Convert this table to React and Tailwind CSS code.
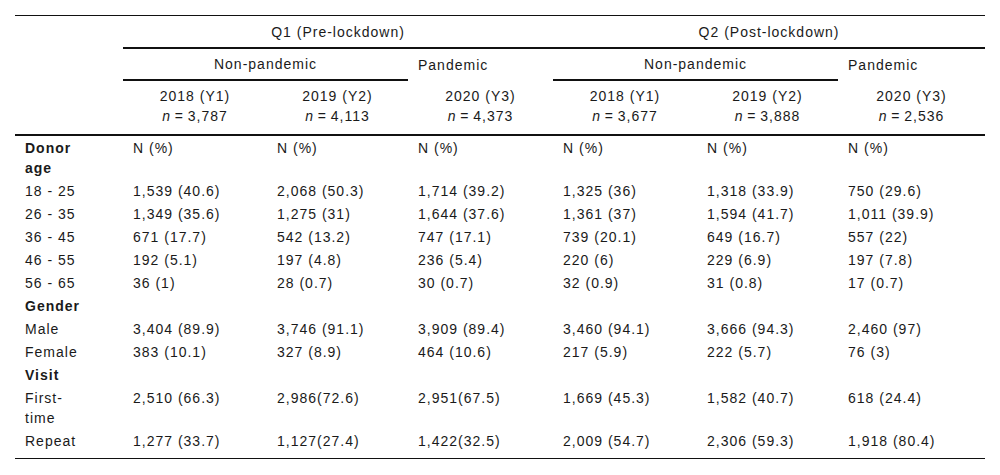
import React from 'react';

const years = [
  { label: '2018 (Y1)', n: '3,787' },
  { label: '2019 (Y2)', n: '4,113' },
  { label: '2020 (Y3)', n: '4,373' },
  { label: '2018 (Y1)', n: '3,677' },
  { label: '2019 (Y2)', n: '3,888' },
  { label: '2020 (Y3)', n: '2,536' },
];

const rows = [
  { label: 'Donor age', head: true, cells: ['N (%)', 'N (%)', 'N (%)', 'N (%)', 'N (%)', 'N (%)'] },
  { label: '18 - 25', cells: ['1,539 (40.6)', '2,068 (50.3)', '1,714 (39.2)', '1,325 (36)', '1,318 (33.9)', '750 (29.6)'] },
  { label: '26 - 35', cells: ['1,349 (35.6)', '1,275 (31)', '1,644 (37.6)', '1,361 (37)', '1,594 (41.7)', '1,011 (39.9)'] },
  { label: '36 - 45', cells: ['671 (17.7)', '542 (13.2)', '747 (17.1)', '739 (20.1)', '649 (16.7)', '557 (22)'] },
  { label: '46 - 55', cells: ['192 (5.1)', '197 (4.8)', '236 (5.4)', '220 (6)', '229 (6.9)', '197 (7.8)'] },
  { label: '56 - 65', cells: ['36 (1)', '28 (0.7)', '30 (0.7)', '32 (0.9)', '31 (0.8)', '17 (0.7)'] },
  { label: 'Gender', head: true, cells: ['', '', '', '', '', ''] },
  { label: 'Male', cells: ['3,404 (89.9)', '3,746 (91.1)', '3,909 (89.4)', '3,460 (94.1)', '3,666 (94.3)', '2,460 (97)'] },
  { label: 'Female', cells: ['383 (10.1)', '327 (8.9)', '464 (10.6)', '217 (5.9)', '222 (5.7)', '76 (3)'] },
  { label: 'Visit', head: true, cells: ['', '', '', '', '', ''] },
  { label: 'First-time', cells: ['2,510 (66.3)', '2,986(72.6)', '2,951(67.5)', '1,669 (45.3)', '1,582 (40.7)', '618 (24.4)'] },
  { label: 'Repeat', cells: ['1,277 (33.7)', '1,127(27.4)', '1,422(32.5)', '2,009 (54.7)', '2,306 (59.3)', '1,918 (80.4)'] },
];

export default function App() {
  return (
    <div className="bg-white w-[1000px] h-[475px] pt-[15px] pl-[15px] font-['Liberation_Sans',Arial,sans-serif] text-[14px] tracking-[1px] text-[#1a1a1a]">
      <table className="w-[970px] table-fixed border-separate border-spacing-0 border-t border-[#111]">
        <colgroup>
          <col className="w-[108px]" />
          <col className="w-[144px]" />
          <col className="w-[141px]" />
          <col className="w-[145px]" />
          <col className="w-[144px]" />
          <col className="w-[141px]" />
          <col className="w-[147px]" />
        </colgroup>
        <thead>
          <tr>
            <th rowSpan={3} className="border-b-2 border-[#111]"></th>
            <th colSpan={3} className="h-[33px] font-normal text-center leading-[20px] border-b-2 border-[#111]">
              Q1 (Pre-lockdown)
            </th>
            <th colSpan={3} className="h-[33px] font-normal text-center leading-[20px] border-b-2 border-[#111]">
              Q2 (Post-lockdown)
            </th>
          </tr>
          <tr>
            <th colSpan={2} className="h-[32px] font-normal text-center leading-[20px] border-b-2 border-[#111]">
              Non-pandemic
            </th>
            <th className="h-[32px] font-normal text-left pl-[10px] leading-[20px]">Pandemic</th>
            <th colSpan={2} className="h-[32px] font-normal text-center leading-[20px] border-b-2 border-[#111]">
              Non-pandemic
            </th>
            <th className="h-[32px] font-normal text-left pl-[10px] leading-[20px]">Pandemic</th>
          </tr>
          <tr>
            {years.map((y, i) => (
              <th
                key={i}
                className="font-normal text-center leading-[20px] pt-[5px] pb-[8px] border-b-2 border-[#111]"
              >
                <div>{y.label}</div>
                <div>
                  <i>n</i>{'\u2009=\u2009'}{y.n}
                </div>
              </th>
            ))}
          </tr>
        </thead>
        <tbody>
          {rows.map((r, ri) => {
            const last = ri === rows.length - 1;
            const pad = last ? 'pt-[2px] pb-[7px] border-b border-[#111]' : 'pt-[2px] pb-[1px]';
            return (
              <tr key={ri}>
                <td className={`align-top leading-[20px] pl-[10px] pr-[38px] ${pad} ${r.head ? 'font-bold' : ''}`}>
                  {r.label}
                </td>
                {r.cells.map((c, ci) => (
                  <td key={ci} className={`align-top leading-[20px] pl-[10px] ${pad}`}>
                    {c}
                  </td>
                ))}
              </tr>
            );
          })}
        </tbody>
      </table>
    </div>
  );
}
